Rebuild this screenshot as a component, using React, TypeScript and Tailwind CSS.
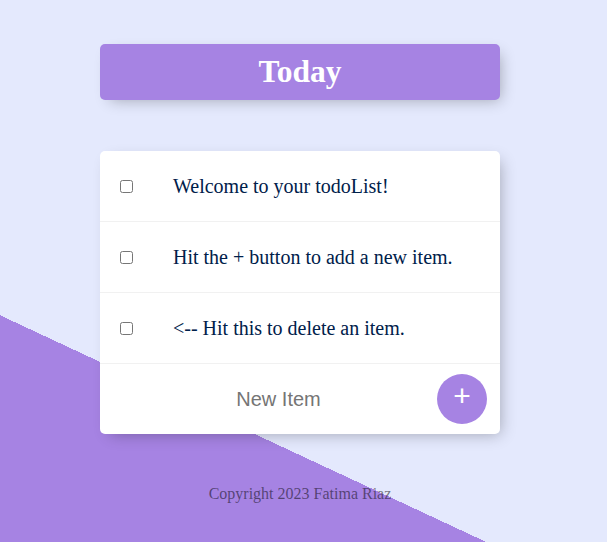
import React from "react";

const items = [
  "Welcome to your todoList!",
  "Hit the + button to add a new item.",
  "<-- Hit this to delete an item.",
];

export default function App() {
  return (
    <div className="w-full h-[542px] overflow-hidden bg-[#E4E9FD] bg-[linear-gradient(25deg,#A683E3_205.5px,#E4E9FD_205.5px)] font-['Liberation_Serif',serif]">
      <div className="w-[600px] pt-[44px]">
        <div className="mx-auto w-[400px] h-[56px] rounded-[5px] bg-[#A683E3] shadow-[5px_5px_15px_-5px_rgba(0,0,0,0.3)] flex items-center justify-center">
          <h1 className="text-white font-bold text-[31.5px] leading-none">Today</h1>
        </div>
        <div className="mx-auto mt-[51px] w-[400px] rounded-[5px] bg-white shadow-[5px_5px_15px_-5px_rgba(0,0,0,0.3)]">
          {items.map((t) => (
            <div key={t} className="h-[71px] flex items-center border-b border-[#F1F1F1]">
              <input type="checkbox" className="m-[20px] w-[13px] h-[13px]" />
              <p className="p-[20px] text-[20px] text-[#00204a] leading-[23px]">{t}</p>
            </div>
          ))}
          <form
            className="h-[70px] flex items-center ml-[20px]"
            onSubmit={(e) => e.preventDefault()}
          >
            <input
              type="text"
              placeholder="New Item"
              className="w-[317px] h-[60px] text-center text-[20px] bg-transparent outline-none font-['Liberation_Sans',Arial,sans-serif] placeholder:text-[#757575]"
            />
            <button
              type="submit"
              className="w-[50px] h-[50px] rounded-full bg-[#A683E3] text-white text-[30px] leading-none pb-[6px] font-['Liberation_Sans',Arial,sans-serif] flex items-center justify-center"
            >
              +
            </button>
          </form>
        </div>
        <footer className="mt-[48px] text-center text-[16px] text-black/50">
          Copyright 2023 Fatima Riaz
        </footer>
      </div>
    </div>
  );
}
